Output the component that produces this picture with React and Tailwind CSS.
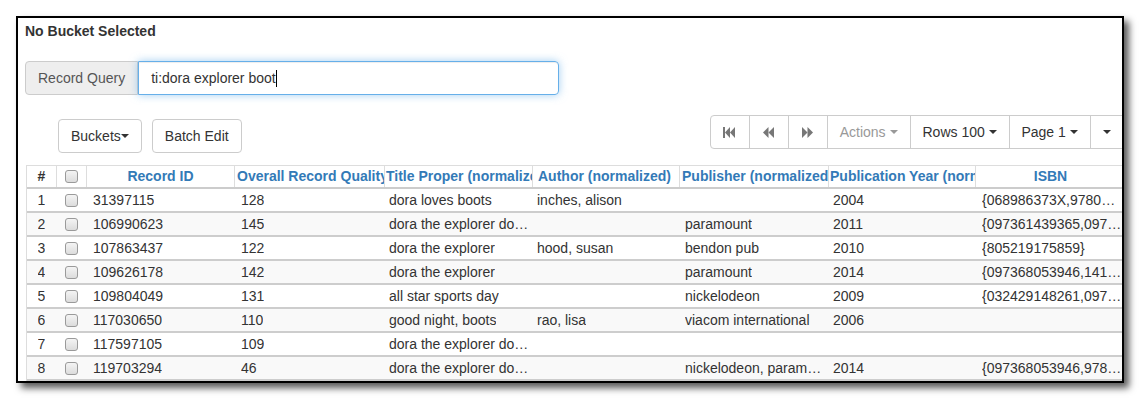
import React from 'react';

const cols = [
  { w: 'w-[29px]', head: '#', hc: 'justify-center text-[#333]', bc: 'justify-center' },
  { w: 'w-[30px]', head: 'cb', hc: 'justify-center', bc: 'justify-center' },
  { w: 'w-[148px]', head: 'Record ID', hc: 'justify-center', bc: 'pl-[7px]' },
  { w: 'w-[150px]', head: 'Overall Record Quality', hc: 'pl-[2px]', bc: 'pl-[7px]' },
  { w: 'w-[148px]', head: 'Title Proper (normalized)', hc: 'pl-[1px]', bc: 'pl-[5px] pr-[3px]' },
  { w: 'w-[147px]', head: 'Author (normalized)', hc: 'pl-[5px]', bc: 'pl-[5px] pr-[3px]' },
  { w: 'w-[149px]', head: 'Publisher (normalized)', hc: 'pl-[2px]', bc: 'pl-[6px] pr-[5px]' },
  { w: 'w-[147px]', head: 'Publication Year (normalized)', hc: 'pl-[1px]', bc: 'pl-[5px] pr-[3px]' },
  { w: 'w-[150px]', head: 'ISBN', hc: 'justify-center', bc: 'pl-[7px] pr-[3px]' },
];

const rows = [
  ['1', '', '31397115', '128', 'dora loves boots', 'inches, alison', '', '2004', '{068986373X,9780689863738}'],
  ['2', '', '106990623', '145', "dora the explorer dora's big birthday", '', 'paramount', '2011', '{097361439365,097368053946}'],
  ['3', '', '107863437', '122', 'dora the explorer', 'hood, susan', 'bendon pub', '2010', '{805219175859}'],
  ['4', '', '109626178', '142', 'dora the explorer', '', 'paramount', '2014', '{097368053946,1415724953}'],
  ['5', '', '109804049', '131', 'all star sports day', '', 'nickelodeon', '2009', '{032429148261,097368053946}'],
  ['6', '', '117030650', '110', 'good night, boots', 'rao, lisa', 'viacom international', '2006', ''],
  ['7', '', '117597105', '109', 'dora the explorer dora saves the snow princess', '', '', '', ''],
  ['8', '', '119703294', '46', 'dora the explorer dora and diego', '', 'nickelodeon, paramount', '2014', '{097368053946,9781415724953}'],
];

const Checkbox = () => (
  <div className="w-[13px] h-[13px] rounded-[3px] border border-[#9a9a9a] bg-gradient-to-b from-[#f4f4f4] to-[#dcdcdc]" />
);

const Caret = () => (
  <span className="inline-block w-0 h-0 border-l-[4px] border-r-[4px] border-t-[4px] border-l-transparent border-r-transparent border-t-current align-middle" />
);

const FastBack = () => (
  <svg width="13" height="11" viewBox="0 0 13 11" fill="#777">
    <rect x="0" y="0" width="2" height="11" />
    <polygon points="2,5.5 7,0 7,11" />
    <polygon points="7,5.5 12,0 12,11" />
  </svg>
);

const Back = () => (
  <svg width="11" height="11" viewBox="0 0 11 11" fill="#777">
    <polygon points="0,5.5 5.5,0 5.5,11" />
    <polygon points="5.5,5.5 11,0 11,11" />
  </svg>
);

const Forward = () => (
  <svg width="11" height="11" viewBox="0 0 11 11" fill="#777">
    <polygon points="0,0 5.5,5.5 0,11" />
    <polygon points="5.5,0 11,5.5 5.5,11" />
  </svg>
);

export default function App() {
  return (
    <div className="bg-white w-[1141px] h-[400px] pt-[16px] pl-[16px] font-['Liberation_Sans',Arial,sans-serif] text-[14px] text-[#333]">
      <div className="w-[1108px] h-[367px] border-2 border-black bg-white overflow-hidden shadow-[5px_5px_7px_rgba(0,0,0,0.65)]">
        {/* heading */}
        <div className="pl-[7px] pt-[3px] leading-[20px] font-bold">No Bucket Selected</div>

        {/* query input */}
        <div className="flex ml-[7px] mt-[20px] h-[34px]">
          <div className="flex items-center px-[12px] bg-[#eee] border border-[#ccc] rounded-l-[4px] text-[#555] whitespace-nowrap">
            Record Query
          </div>
          <div className="flex items-center w-[421px] px-[12px] border border-[#66afe9] rounded-r-[4px] shadow-[inset_0_1px_1px_rgba(0,0,0,0.075),0_0_8px_rgba(102,175,233,0.6)] text-[#333]">
            ti:dora explorer boot
            <span className="inline-block w-px h-[17px] bg-black" />
          </div>
        </div>

        {/* toolbar */}
        <div className="flex items-start mt-[20px] whitespace-nowrap">
          <div className="flex gap-[10px] ml-[40px] mt-[4px]">
            <button className="h-[34px] px-[12px] border border-[#ccc] rounded-[4px] bg-white text-[#333] flex items-center">
              Buckets<Caret />
            </button>
            <button className="h-[34px] px-[12px] border border-[#ccc] rounded-[4px] bg-white text-[#333]">
              Batch Edit
            </button>
          </div>
          <div className="flex h-[34px] ml-[468px] border border-[#ccc] rounded-l-[4px] bg-white shrink-0">
            <div className="w-[38px] flex items-center justify-center"><FastBack /></div>
            <div className="w-[39px] flex items-center justify-center border-l border-[#ccc]"><Back /></div>
            <div className="w-[39px] flex items-center justify-center border-l border-[#ccc]"><Forward /></div>
            <div className="w-[83px] flex items-center justify-center gap-[4px] border-l border-[#ccc] text-[#999]">
              Actions <Caret />
            </div>
            <div className="w-[99px] flex items-center justify-center gap-[4px] border-l border-[#ccc] text-[#333]">
              Rows 100 <Caret />
            </div>
            <div className="w-[81px] flex items-center justify-center gap-[4px] border-l border-[#ccc] text-[#333]">
              Page 1 <Caret />
            </div>
            <div className="w-[34px] flex items-center justify-center border-l border-[#ccc] text-[#333]">
              <Caret />
            </div>
          </div>
        </div>

        {/* grid */}
        <div className="ml-[8px] mt-[12px] w-[1200px] border-l border-[#ddd]">
          <div className="flex h-[24px] border-t border-[#ddd] border-b-2 border-b-[#ccc]">
            {cols.map((c, i) => (
              <div
                key={i}
                className={`${c.w} shrink-0 flex items-center overflow-hidden whitespace-nowrap font-bold text-[#337ab7] ${i > 0 ? 'border-l border-[#ddd]' : ''} ${c.hc}`}
              >
                {c.head === 'cb' ? <Checkbox /> : c.head === '#' ? <span className="text-[#333]">#</span> : c.head}
              </div>
            ))}
          </div>
          {rows.map((r, ri) => (
            <div
              key={ri}
              className={`flex h-[24px] border-b-2 border-[#cdcdcd] ${ri % 2 === 1 ? 'bg-[#f9f9f9]' : 'bg-white'}`}
            >
              {cols.map((c, ci) => (
                <div
                  key={ci}
                  className={`${c.w} shrink-0 flex items-center whitespace-nowrap overflow-hidden ${c.bc}`}
                >
                  {ci === 1 ? (
                    <Checkbox />
                  ) : (
                    <span className="block overflow-hidden text-ellipsis whitespace-nowrap">{r[ci]}</span>
                  )}
                </div>
              ))}
            </div>
          ))}
        </div>
      </div>
    </div>
  );
}
